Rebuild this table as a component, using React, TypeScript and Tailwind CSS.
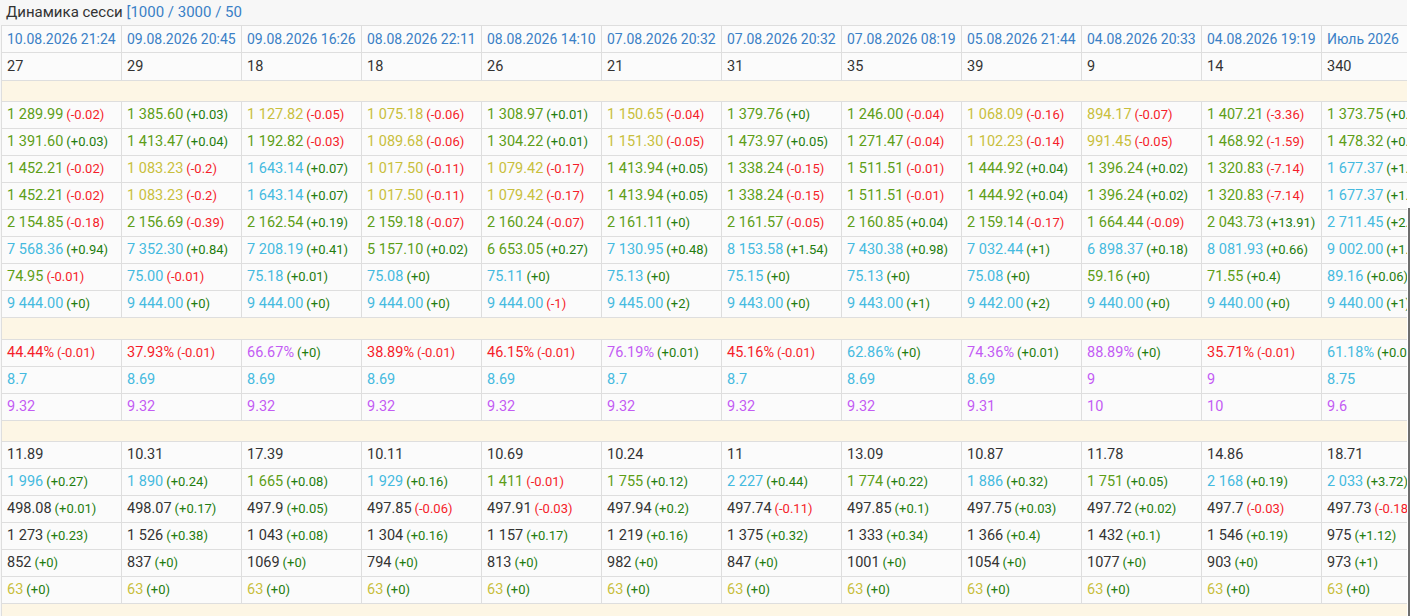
import { clsx } from "clsx"

type Tone = "g" | "y" | "c" | "p" | "r" | "d"

// value, tone, delta
type Cell = [string, Tone, string?]

const TONE: Record<Tone, string> = {
  g: "text-[#5e9e17]",
  y: "text-[#c9bf3d]",
  c: "text-[#45badf]",
  p: "text-[#c35cf4]",
  r: "text-[#f51d2a]",
  d: "text-[#333333]",
}

const HEADERS = [
  "10.08.2026 21:24",
  "09.08.2026 20:45",
  "09.08.2026 16:26",
  "08.08.2026 22:11",
  "08.08.2026 14:10",
  "07.08.2026 20:32",
  "07.08.2026 20:32",
  "07.08.2026 08:19",
  "05.08.2026 21:44",
  "04.08.2026 20:33",
  "04.08.2026 19:19",
  "Июль 2026",
]

const COUNTS = ["27", "29", "18", "18", "26", "21", "31", "35", "39", "9", "14", "340"]

const ROW3: Cell[] = [
  ["1 452.21", "g", "-0.02"],
  ["1 083.23", "y", "-0.2"],
  ["1 643.14", "c", "+0.07"],
  ["1 017.50", "y", "-0.11"],
  ["1 079.42", "y", "-0.17"],
  ["1 413.94", "g", "+0.05"],
  ["1 338.24", "g", "-0.15"],
  ["1 511.51", "g", "-0.01"],
  ["1 444.92", "g", "+0.04"],
  ["1 396.24", "g", "+0.02"],
  ["1 320.83", "g", "-7.14"],
  ["1 677.37", "c", "+1.12"],
]

const PRICES: Cell[][] = [
  [
    ["1 289.99", "g", "-0.02"],
    ["1 385.60", "g", "+0.03"],
    ["1 127.82", "y", "-0.05"],
    ["1 075.18", "y", "-0.06"],
    ["1 308.97", "g", "+0.01"],
    ["1 150.65", "y", "-0.04"],
    ["1 379.76", "g", "+0"],
    ["1 246.00", "g", "-0.04"],
    ["1 068.09", "y", "-0.16"],
    ["894.17", "y", "-0.07"],
    ["1 407.21", "g", "-3.36"],
    ["1 373.75", "g", "+0.02"],
  ],
  [
    ["1 391.60", "g", "+0.03"],
    ["1 413.47", "g", "+0.04"],
    ["1 192.82", "g", "-0.03"],
    ["1 089.68", "y", "-0.06"],
    ["1 304.22", "g", "+0.01"],
    ["1 151.30", "y", "-0.05"],
    ["1 473.97", "g", "+0.05"],
    ["1 271.47", "g", "-0.04"],
    ["1 102.23", "y", "-0.14"],
    ["991.45", "y", "-0.05"],
    ["1 468.92", "g", "-1.59"],
    ["1 478.32", "g", "+0.03"],
  ],
  ROW3,
  ROW3,
  [
    ["2 154.85", "g", "-0.18"],
    ["2 156.69", "g", "-0.39"],
    ["2 162.54", "g", "+0.19"],
    ["2 159.18", "g", "-0.07"],
    ["2 160.24", "g", "-0.07"],
    ["2 161.11", "g", "+0"],
    ["2 161.57", "g", "-0.05"],
    ["2 160.85", "g", "+0.04"],
    ["2 159.14", "g", "-0.17"],
    ["1 664.44", "g", "-0.09"],
    ["2 043.73", "g", "+13.91"],
    ["2 711.45", "c", "+2.31"],
  ],
  [
    ["7 568.36", "c", "+0.94"],
    ["7 352.30", "c", "+0.84"],
    ["7 208.19", "c", "+0.41"],
    ["5 157.10", "g", "+0.02"],
    ["6 653.05", "g", "+0.27"],
    ["7 130.95", "c", "+0.48"],
    ["8 153.58", "c", "+1.54"],
    ["7 430.38", "c", "+0.98"],
    ["7 032.44", "c", "+1"],
    ["6 898.37", "c", "+0.18"],
    ["8 081.93", "c", "+0.66"],
    ["9 002.00", "c", "+1.05"],
  ],
  [
    ["74.95", "g", "-0.01"],
    ["75.00", "c", "-0.01"],
    ["75.18", "c", "+0.01"],
    ["75.08", "c", "+0"],
    ["75.11", "c", "+0"],
    ["75.13", "c", "+0"],
    ["75.15", "c", "+0"],
    ["75.13", "c", "+0"],
    ["75.08", "c", "+0"],
    ["59.16", "g", "+0"],
    ["71.55", "g", "+0.4"],
    ["89.16", "c", "+0.06"],
  ],
  [
    ["9 444.00", "c", "+0"],
    ["9 444.00", "c", "+0"],
    ["9 444.00", "c", "+0"],
    ["9 444.00", "c", "+0"],
    ["9 444.00", "c", "-1"],
    ["9 445.00", "c", "+2"],
    ["9 443.00", "c", "+0"],
    ["9 443.00", "c", "+1"],
    ["9 442.00", "c", "+2"],
    ["9 440.00", "c", "+0"],
    ["9 440.00", "c", "+0"],
    ["9 440.00", "c", "+1"],
  ],
]

const RATES: Cell[][] = [
  [
    ["44.44%", "r", "-0.01"],
    ["37.93%", "r", "-0.01"],
    ["66.67%", "p", "+0"],
    ["38.89%", "r", "-0.01"],
    ["46.15%", "r", "-0.01"],
    ["76.19%", "p", "+0.01"],
    ["45.16%", "r", "-0.01"],
    ["62.86%", "c", "+0"],
    ["74.36%", "p", "+0.01"],
    ["88.89%", "p", "+0"],
    ["35.71%", "r", "-0.01"],
    ["61.18%", "c", "+0.02"],
  ],
  [
    ["8.7", "c"],
    ["8.69", "c"],
    ["8.69", "c"],
    ["8.69", "c"],
    ["8.69", "c"],
    ["8.7", "c"],
    ["8.7", "c"],
    ["8.69", "c"],
    ["8.69", "c"],
    ["9", "p"],
    ["9", "p"],
    ["8.75", "c"],
  ],
  [
    ["9.32", "p"],
    ["9.32", "p"],
    ["9.32", "p"],
    ["9.32", "p"],
    ["9.32", "p"],
    ["9.32", "p"],
    ["9.32", "p"],
    ["9.32", "p"],
    ["9.31", "p"],
    ["10", "p"],
    ["10", "p"],
    ["9.6", "p"],
  ],
]

const STATS: Cell[][] = [
  ["11.89", "10.31", "17.39", "10.11", "10.69", "10.24", "11", "13.09", "10.87", "11.78", "14.86", "18.71"].map(
    (v): Cell => [v, "d"]
  ),
  [
    ["1 996", "c", "+0.27"],
    ["1 890", "c", "+0.24"],
    ["1 665", "g", "+0.08"],
    ["1 929", "c", "+0.16"],
    ["1 411", "g", "-0.01"],
    ["1 755", "g", "+0.12"],
    ["2 227", "c", "+0.44"],
    ["1 774", "g", "+0.22"],
    ["1 886", "c", "+0.32"],
    ["1 751", "g", "+0.05"],
    ["2 168", "c", "+0.19"],
    ["2 033", "c", "+3.72"],
  ],
  [
    ["498.08", "d", "+0.01"],
    ["498.07", "d", "+0.17"],
    ["497.9", "d", "+0.05"],
    ["497.85", "d", "-0.06"],
    ["497.91", "d", "-0.03"],
    ["497.94", "d", "+0.2"],
    ["497.74", "d", "-0.11"],
    ["497.85", "d", "+0.1"],
    ["497.75", "d", "+0.03"],
    ["497.72", "d", "+0.02"],
    ["497.7", "d", "-0.03"],
    ["497.73", "d", "-0.18"],
  ],
  [
    ["1 273", "d", "+0.23"],
    ["1 526", "d", "+0.38"],
    ["1 043", "d", "+0.08"],
    ["1 304", "d", "+0.16"],
    ["1 157", "d", "+0.17"],
    ["1 219", "d", "+0.16"],
    ["1 375", "d", "+0.32"],
    ["1 333", "d", "+0.34"],
    ["1 366", "d", "+0.4"],
    ["1 432", "d", "+0.1"],
    ["1 546", "d", "+0.19"],
    ["975", "d", "+1.12"],
  ],
  [
    ["852", "d", "+0"],
    ["837", "d", "+0"],
    ["1069", "d", "+0"],
    ["794", "d", "+0"],
    ["813", "d", "+0"],
    ["982", "d", "+0"],
    ["847", "d", "+0"],
    ["1001", "d", "+0"],
    ["1054", "d", "+0"],
    ["1077", "d", "+0"],
    ["903", "d", "+0"],
    ["973", "d", "+1"],
  ],
  Array.from({ length: 12 }, (): Cell => ["63", "y", "+0"]),
]

function Row({ children, className }: { children?: React.ReactNode; className?: string }) {
  return <div className={clsx("flex border-b border-[#dedede]", className)}>{children}</div>
}

function Td({ children, className }: { children?: React.ReactNode; className?: string }) {
  return (
    <div
      className={clsx(
        "flex h-full w-[120px] shrink-0 items-center overflow-hidden whitespace-nowrap border-r border-[#dedede] pl-[5px]",
        className
      )}
    >
      {children}
    </div>
  )
}

function Spacer({ className }: { className: string }) {
  return <Row className={clsx("bg-[#fdf6e5]", className)} />
}

function DataRows({ rows }: { rows: Cell[][] }) {
  return (
    <>
      {rows.map((row, i) => (
        <Row key={i} className="h-[27px]">
          {row.map(([value, tone, delta], j) => (
            <Td key={j} className="text-[14.5px]">
              <span className={TONE[tone]}>{value}</span>
              {delta && (
                <span
                  className={clsx(
                    "ml-[3px] text-[13px]",
                    delta.startsWith("-") ? "text-[#f51d2a]" : "text-[#237d0f]"
                  )}
                >
                  ({delta})
                </span>
              )}
            </Td>
          ))}
        </Row>
      ))}
    </>
  )
}

export default function App() {
  return (
    <div className="flex h-[616px] w-[1411px] overflow-hidden bg-white font-['Roboto',sans-serif] text-[14px] text-[#333]">
      <div className="w-[1407px] shrink-0 overflow-hidden bg-[#f7f7f7]">
        {/* Title */}
        <div className="flex h-[25px] items-center">
          <div className="w-[242px] overflow-hidden whitespace-nowrap pl-[6px] text-[15px]">
            Динамика сесси <span className="text-[#3a80c6]">[1000 / 3000 / 5000]</span>
          </div>
        </div>

        {/* Table */}
        <div className="ml-px w-[1441px] border-l border-t border-[#dedede] bg-[#fbfbfb]">
          <Row className="h-[27px]">
            {HEADERS.map((h, i) => (
              <Td key={i} className="text-[#3a80c6]">
                {h}
              </Td>
            ))}
          </Row>
          <Row className="h-[28px]">
            {COUNTS.map((c, i) => (
              <Td key={i} className="text-[14.5px]">
                {c}
              </Td>
            ))}
          </Row>
          <Spacer className="h-[21px]" />
          <DataRows rows={PRICES} />
          <Spacer className="h-[22px]" />
          <DataRows rows={RATES} />
          <Spacer className="h-[21px]" />
          <DataRows rows={STATS} />
          <Spacer className="h-[22px]" />
        </div>
      </div>

      {/* Scrollbar */}
      <div className="relative flex-1 bg-white">
        <div className="absolute bottom-0 left-[1px] top-[208px] w-[2px] bg-[#6e6e6e]" />
      </div>
    </div>
  )
}
